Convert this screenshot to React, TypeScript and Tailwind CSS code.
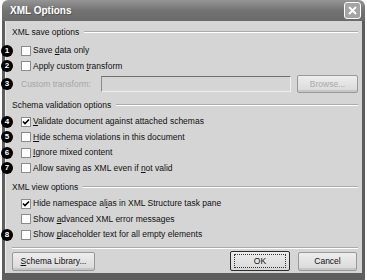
import type { ReactNode } from 'react';

// underlined access key
const K = ({ children }: { children: ReactNode }) => (
  <span className="underline underline-offset-[1px]">{children}</span>
);

function Callout({ n }: { n: number }) {
  return (
    <span className="absolute left-[-5px] top-1/2 z-10 flex h-[12px] w-[12px] -translate-y-1/2 items-center justify-center rounded-full bg-black text-[8px] font-bold leading-none text-white">
      {n}
    </span>
  );
}

function Box({ checked }: { checked?: boolean }) {
  return (
    <span className="flex h-[10px] w-[10px] shrink-0 items-center justify-center border border-[#8c8c8c] bg-white">
      {checked && (
        <svg width="8" height="8" viewBox="0 0 8 8">
          <path d="M1 3.5 L3 5.5 L7 1.5" fill="none" stroke="#000" strokeWidth="1.6" />
        </svg>
      )}
    </span>
  );
}

function CheckRow({
  n,
  checked,
  children,
}: {
  n?: number;
  checked?: boolean;
  children: ReactNode;
}) {
  return (
    <div className="relative flex h-[15.5px] items-center pl-[15px]">
      {n && <Callout n={n} />}
      <Box checked={checked} />
      <span className="ml-[2px] whitespace-nowrap">{children}</span>
    </div>
  );
}

function Section({ title, className }: { title: string; className?: string }) {
  return (
    <div className={`flex h-[12px] items-center pl-[6px] pr-[4px] ${className ?? ''}`}>
      <span className="whitespace-nowrap">{title}</span>
      <div className="ml-[5px] h-[2px] flex-1 border-t border-b border-t-[#ababab] border-b-white" />
    </div>
  );
}

function Button({
  children,
  className,
  disabled,
}: {
  children: ReactNode;
  className?: string;
  disabled?: boolean;
}) {
  return (
    <div
      className={`flex items-center justify-center rounded-[2px] border border-[#999] bg-gradient-to-b from-[#ededed] to-[#d9d9d9] shadow-[inset_0_-2px_0_#c6c6c6] ${
        disabled ? 'text-[#a8a8a8]' : 'text-[#111]'
      } ${className ?? ''}`}
    >
      {children}
    </div>
  );
}

function App() {
  return (
    <div className="h-[280px] w-[367px] overflow-hidden bg-white font-['Liberation_Sans',Arial,sans-serif] text-[8.5px] text-[#111]">
      <div className="ml-[2px] flex h-[280px] w-[363px] flex-col">
        <header className="flex h-[23px] items-center rounded-t-[6px] bg-gradient-to-b from-[#959595] via-[#737373] to-[#6a6a6a] pl-[8px] pr-[4px]">
          <span className="text-[10px] font-bold text-white [text-shadow:1px_1px_0_#555]">
            XML Options
          </span>
          <div className="ml-auto flex h-[17px] w-[17px] items-center justify-center rounded-[3px] border border-white bg-[#a4a4a4]">
            <svg width="9" height="9" viewBox="0 0 9 9">
              <path d="M1 1 L8 8 M8 1 L1 8" stroke="#fff" strokeWidth="1.8" />
            </svg>
          </div>
        </header>

        <div className="flex flex-1 flex-col border-x-[3px] border-b-[7px] border-[#5e5e5e] bg-[#d5d5d5]">
          <div className="flex flex-1 flex-col border-l border-[#ececec] pt-[5px] pb-[2px]">
            <Section title="XML save options" />
            <div className="mt-[5px]">
              <CheckRow n={1}>
                Save <K>d</K>ata only
              </CheckRow>
              <CheckRow n={2}>
                Apply custom <K>t</K>ransform
              </CheckRow>
            </div>
            <div className="relative flex h-[20px] items-center pl-[15px] pr-[4px]">
              <Callout n={3} />
              <span className="w-[80px] whitespace-nowrap text-[#a5a5a5]">Custom transform:</span>
              <div className="h-[16px] w-[190px] border border-t-[#6e6e6e] border-l-[#8a8a8a] border-r-[#efefef] border-b-[#efefef] bg-[#d5d5d5]" />
              <Button disabled className="ml-auto h-[18px] w-[61px]">
                Browse...
              </Button>
            </div>

            <Section title="Schema validation options" className="mt-[5px]" />
            <div className="mt-[3px]">
              <CheckRow n={4} checked>
                <K>V</K>alidate document against attached schemas
              </CheckRow>
              <CheckRow n={5}>
                <K>H</K>ide schema violations in this document
              </CheckRow>
              <CheckRow n={6}>
                <K>I</K>gnore mixed content
              </CheckRow>
              <CheckRow n={7}>
                Allow saving as XML even if <K>n</K>ot valid
              </CheckRow>
            </div>

            <Section title="XML view options" className="mt-[5px]" />
            <div className="mt-[3px]">
              <CheckRow checked>
                Hide namespace al<K>i</K>as in XML Structure task pane
              </CheckRow>
              <CheckRow>
                Show <K>a</K>dvanced XML error messages
              </CheckRow>
              <CheckRow n={8}>
                Show <K>p</K>laceholder text for all empty elements
              </CheckRow>
            </div>

            <div className="mx-[6px] mr-[4px] mt-[4.5px] h-[2px] border-t border-b border-t-[#ababab] border-b-white" />

            <div className="mt-[2px] flex items-center pl-[6px] pr-[5px]">
              <Button className="h-[19px] w-[83px]">
                <K>S</K>chema Library...
              </Button>
              <div className="ml-auto flex h-[20px] w-[60px] items-center justify-center rounded-[2px] border border-[#2c2c2c] bg-gradient-to-b from-[#ededed] to-[#d9d9d9]">
                <div className="flex h-[14px] w-[52px] items-center justify-center border border-dotted border-[#333]">
                  OK
                </div>
              </div>
              <Button className="ml-[8px] h-[19px] w-[59px]">Cancel</Button>
            </div>
          </div>
        </div>
      </div>
    </div>
  );
}

export default App;
